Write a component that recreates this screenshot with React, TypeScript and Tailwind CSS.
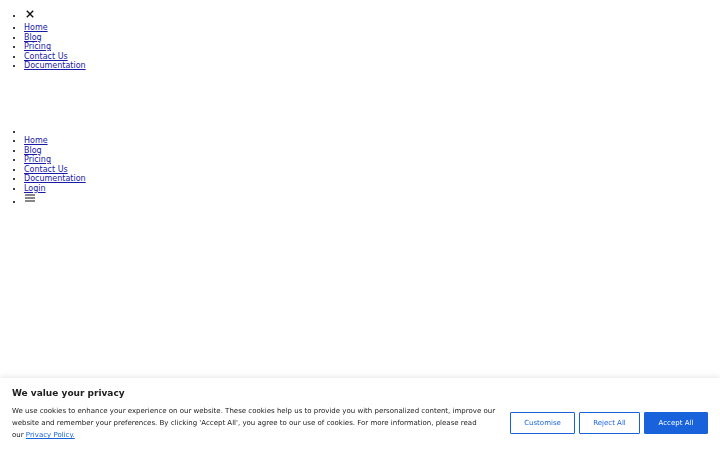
export default function App() {
  const links = ['Home', 'Blog', 'Pricing', 'Contact Us', 'Documentation'];

  return (
    <div className="min-h-[450px] bg-white px-[4px] pt-[8px] font-['DejaVu_Sans',sans-serif] text-[8px] text-black">
      <ul className="list-disc pl-[20px]">
        <li className="leading-[15px]">
          <svg className="ml-[2px] inline align-baseline" width="8" height="8" viewBox="0 0 8 8" fill="none" stroke="#111" strokeWidth="1.4">
            <path d="M0.8 0.8 L7.2 7.2 M7.2 0.8 L0.8 7.2" />
          </svg>
        </li>
        {links.map((l) => (
          <li key={l} className="leading-[9.5px]">
            <a href="#" className="text-[#1a1aa8] underline">
              {l}
            </a>
          </li>
        ))}
      </ul>

      <ul className="mt-[56px] list-disc pl-[20px]">
        <li className="leading-[9.5px]"></li>
        {[...links, 'Login'].map((l) => (
          <li key={l} className="leading-[9.5px]">
            <a href="#" className="text-[#1a1aa8] underline">
              {l}
            </a>
          </li>
        ))}
        <li className="leading-[17px]">
          <svg className="ml-[1px] inline align-[2px]" width="10" height="8" viewBox="0 0 10 8" fill="none" stroke="#111" strokeWidth="1.1">
            <path d="M0 1 H10 M0 4 H10 M0 7 H10" />
          </svg>
        </li>
      </ul>

      <div className="fixed bottom-0 left-0 right-0 bg-white px-[12px] pt-[10px] pb-[9px] shadow-[0_-1px_5px_rgba(172,171,171,0.3)]">
        <p className="mb-[6px] text-[9px] font-bold leading-[11px] text-[#212121]">We value your privacy</p>
        <div className="flex items-center">
          <p className="flex-1 text-[7px] leading-[12px] text-[#212121]">
            We use cookies to enhance your experience on our website. These cookies help us to provide you with personalized content, improve our website and remember your preferences. By clicking 'Accept All', you agree to our use of cookies. For more information, please read
            <br />
            our{' '}
            <a href="#" className="text-[#1863dc] underline">
              Privacy Policy.
            </a>
          </p>
          <div className="ml-[12px] flex gap-[4px]">
            <button className="h-[22px] w-[65px] rounded-[1px] border border-[#1863dc] bg-white text-[7px] text-[#1863dc]">Customise</button>
            <button className="h-[22px] w-[61px] rounded-[1px] border border-[#1863dc] bg-white text-[7px] text-[#1863dc]">Reject All</button>
            <button className="h-[22px] w-[64px] rounded-[1px] border border-[#1863dc] bg-[#1863dc] text-[7px] text-white">Accept All</button>
          </div>
        </div>
      </div>
    </div>
  );
}
